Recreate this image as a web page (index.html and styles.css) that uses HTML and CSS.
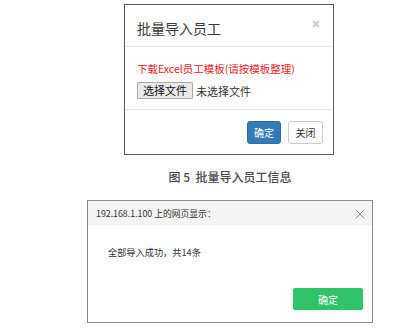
FILE: index.html
```html
<!DOCTYPE html>
<html lang="zh">
<head>
<meta charset="utf-8">
<link rel="stylesheet" href="styles.css">
</head>
<body>
<div class="page">
  <div class="modal">
    <div class="modal-header">
      <span class="modal-title">批量导入员工</span>
      <svg class="close" width="8" height="8" viewBox="0 0 8 8"><path d="M1 1L7 7M7 1L1 7" stroke="#c9c9c9" stroke-width="1.8"/></svg>
    </div>
    <div class="modal-body">
      <div class="download">下载Excel员工模板(请按模板整理)</div>
      <div class="file-row">
        <span class="file-btn">选择文件</span>
        <span class="file-name">未选择文件</span>
      </div>
    </div>
    <div class="modal-footer">
      <span class="btn btn-primary">确定</span>
      <span class="btn btn-default">关闭</span>
    </div>
  </div>
  <div class="caption">图 5&nbsp;&nbsp;批量导入员工信息</div>
  <div class="alert">
    <div class="alert-header">
      <span class="alert-title">192.168.1.100 上的网页显示：</span>
      <svg class="alert-close" width="10" height="10" viewBox="0 0 10 10"><path d="M0.5 0.5L9.5 9.5M9.5 0.5L0.5 9.5" stroke="#8a8a8a" stroke-width="1"/></svg>
    </div>
    <div class="alert-body">全部导入成功，共14条</div>
    <div class="alert-footer">
      <span class="btn-green">确定</span>
    </div>
  </div>
</div>
</body>
</html>
```

FILE: styles.css
```css
* { box-sizing: border-box; }
body {
  margin: 0;
  background: #fff;
  font-family: "Noto Sans CJK SC", "Noto Sans", sans-serif;
  color: #333;
}
.page {
  display: flex;
  flex-direction: column;
  width: 418px;
  height: 330px;
}
.modal {
  margin: 4px 0 0 124px;
  width: 210px;
  border: 1px solid #5a5a5a;
  background: #fff;
}
.modal-header {
  height: 42px;
  border-bottom: 1px solid #e5e5e5;
  display: flex;
  align-items: center;
  justify-content: space-between;
  padding: 4px 13px 0 12px;
}
.modal-title {
  font-size: 14px;
  color: #3a3a3a;
  line-height: 16px;
}
.close { margin-top: -8px; }
.modal-body {
  height: 62px;
  padding: 15px 12px 0 12px;
}
.download {
  font-size: 10.5px;
  line-height: 14px;
  color: #f02020;
}
.file-row {
  margin-top: 6px;
  display: flex;
  align-items: center;
  gap: 3px;
}
.file-btn {
  font-size: 11px;
  line-height: 13px;
  padding: 1px 5px;
  background: #e9e9e9;
  border: 1px solid #a9a9a9;
  border-radius: 1px;
  color: #111;
}
.file-name {
  font-size: 11px;
  color: #333;
}
.modal-footer {
  height: 45px;
  border-top: 1px solid #e5e5e5;
  display: flex;
  justify-content: flex-end;
  align-items: flex-start;
  padding: 11px 10px 0 0;
  gap: 7px;
}
.btn {
  height: 23px;
  width: 34px;
  font-size: 10px;
  display: flex;
  align-items: center;
  justify-content: center;
  border-radius: 3px;
}
.btn-primary {
  background: #337ab7;
  color: #fff;
  border: 1px solid #2e6da4;
}
.btn-default {
  background: #fff;
  color: #333;
  border: 1px solid #ccc;
  width: 35px;
}
.caption {
  margin-top: 14px;
  text-align: center;
  font-size: 12px;
  line-height: 16px;
  font-weight: 500;
  color: #4a4a4a;
  padding-left: 42px;
}
.alert {
  margin: 15px 0 0 87px;
  width: 286px;
  height: 123px;
  border: 1px solid #8c8c8c;
  background: #fff;
  display: flex;
  flex-direction: column;
}
.alert-header {
  height: 24px;
  background: #f4f4f4;
  display: flex;
  align-items: center;
  justify-content: space-between;
  padding: 0 7px 0 8px;
}
.alert-title {
  font-size: 8.8px;
  color: #333;
}
.alert-close { margin-top: 1px; }
.alert-body {
  padding: 19px 0 0 20px;
  font-size: 9.2px;
  line-height: 16px;
  color: #333;
}
.alert-footer {
  margin-top: auto;
  display: flex;
  justify-content: flex-end;
  padding: 0 9px 12px 0;
}
.btn-green {
  width: 70px;
  height: 22px;
  background: #2fc46a;
  color: #fff;
  font-size: 10px;
  border-radius: 2px;
  display: flex;
  align-items: center;
  justify-content: center;
}
```
